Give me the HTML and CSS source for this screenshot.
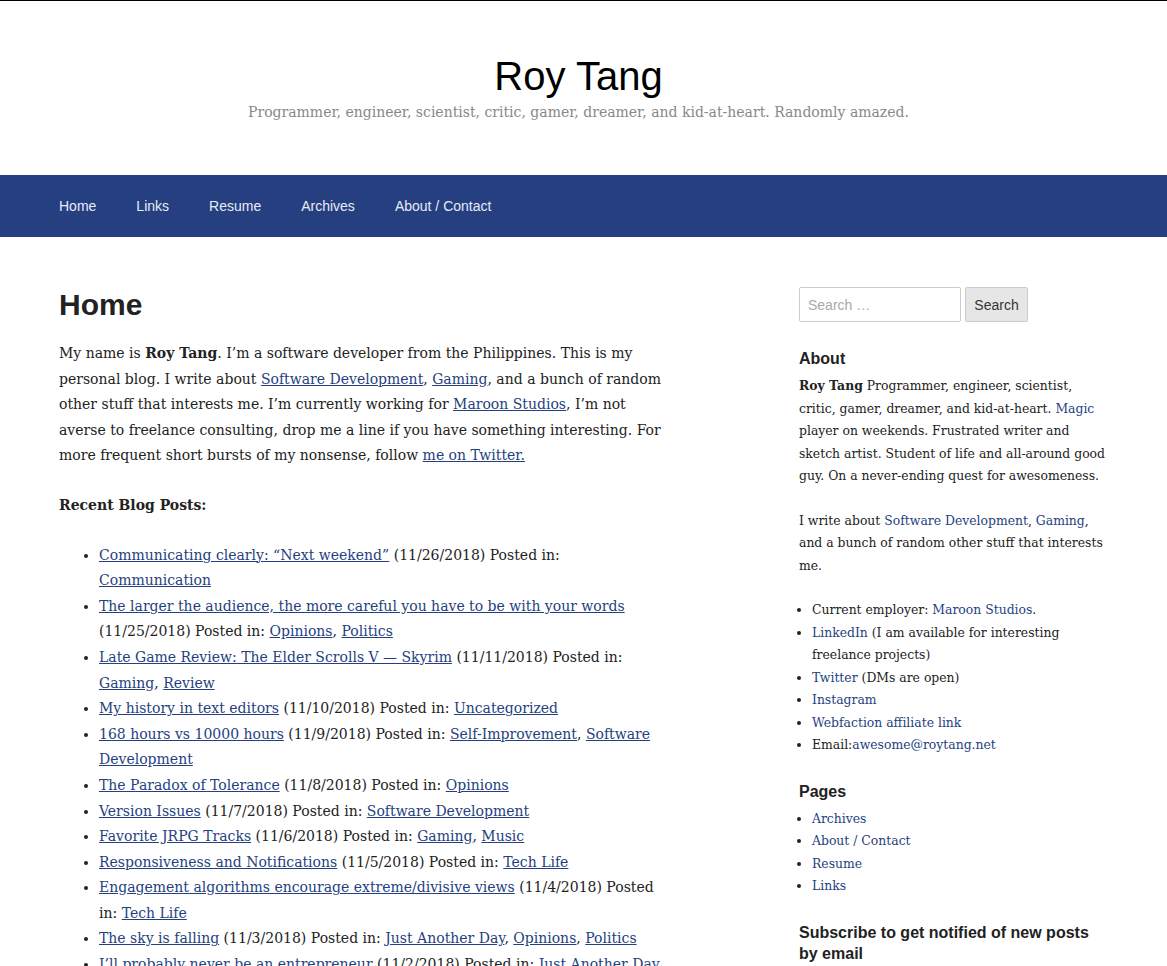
FILE: index.html
```html
<!DOCTYPE html>
<html lang="en">
<head>
<meta charset="utf-8">
<title>Roy Tang</title>
<link rel="stylesheet" href="styles.css">
</head>
<body>
<header class="site-header">
  <h1 class="site-title">Roy Tang</h1>
  <p class="site-desc">Programmer, engineer, scientist, critic, gamer, dreamer, and kid-at-heart. Randomly amazed.</p>
</header>
<nav class="main-nav">
  <ul>
    <li><a href="#">Home</a></li>
    <li><a href="#">Links</a></li>
    <li><a href="#">Resume</a></li>
    <li><a href="#">Archives</a></li>
    <li><a href="#">About / Contact</a></li>
  </ul>
</nav>
<div class="site-content">
  <main class="content">
    <h2 class="page-title">Home</h2>
    <p>My name is <strong>Roy Tang</strong>. I’m a software developer from the Philippines. This is my personal blog. I write about <a href="#">Software Development</a>, <a href="#">Gaming</a>, and a bunch of random other stuff that interests me. I’m currently working for <a href="#">Maroon Studios</a>, I’m not averse to freelance consulting, drop me a line if you have something interesting. For more frequent short bursts of my nonsense, follow <a href="#">me on Twitter.</a></p>
    <p><strong>Recent Blog Posts:</strong></p>
    <ul class="posts">
      <li><a href="#">Communicating clearly: “Next weekend”</a> (11/26/2018) Posted in: <a href="#">Communication</a></li>
      <li><a href="#">The larger the audience, the more careful you have to be with your words</a> (11/25/2018) Posted in: <a href="#">Opinions</a>, <a href="#">Politics</a></li>
      <li><a href="#">Late Game Review: The Elder Scrolls V — Skyrim</a> (11/11/2018) Posted in: <a href="#">Gaming</a>, <a href="#">Review</a></li>
      <li><a href="#">My history in text editors</a> (11/10/2018) Posted in: <a href="#">Uncategorized</a></li>
      <li><a href="#">168 hours vs 10000 hours</a> (11/9/2018) Posted in: <a href="#">Self-Improvement</a>, <a href="#">Software Development</a></li>
      <li><a href="#">The Paradox of Tolerance</a> (11/8/2018) Posted in: <a href="#">Opinions</a></li>
      <li><a href="#">Version Issues</a> (11/7/2018) Posted in: <a href="#">Software Development</a></li>
      <li><a href="#">Favorite JRPG Tracks</a> (11/6/2018) Posted in: <a href="#">Gaming</a>, <a href="#">Music</a></li>
      <li><a href="#">Responsiveness and Notifications</a> (11/5/2018) Posted in: <a href="#">Tech Life</a></li>
      <li><a href="#">Engagement algorithms encourage extreme/divisive views</a> (11/4/2018) Posted in: <a href="#">Tech Life</a></li>
      <li><a href="#">The sky is falling</a> (11/3/2018) Posted in: <a href="#">Just Another Day</a>, <a href="#">Opinions</a>, <a href="#">Politics</a></li>
      <li><a href="#">I’ll probably never be an entrepreneur</a> (11/2/2018) Posted in: <a href="#">Just Another Day</a></li>
    </ul>
  </main>
  <aside class="sidebar">
    <form class="search-form">
      <input type="search" class="search-field" placeholder="Search …">
      <button type="button" class="search-submit">Search</button>
    </form>
    <section class="widget">
      <h3 class="widget-title">About</h3>
      <p><strong>Roy Tang</strong> Programmer, engineer, scientist, critic, gamer, dreamer, and kid-at-heart. <a href="#">Magic</a> player on weekends. Frustrated writer and sketch artist. Student of life and all-around good guy. On a never-ending quest for awesomeness.</p>
      <p>I write about <a href="#">Software Development</a>, <a href="#">Gaming</a>, and a bunch of random other stuff that interests me.</p>
      <ul>
        <li>Current employer: <a href="#">Maroon Studios</a>.</li>
        <li><a href="#">LinkedIn</a> (I am available for interesting freelance projects)</li>
        <li><a href="#">Twitter</a> (DMs are open)</li>
        <li><a href="#">Instagram</a></li>
        <li><a href="#">Webfaction affiliate link</a></li>
        <li>Email:<a href="#">awesome@roytang.net</a></li>
      </ul>
    </section>
    <section class="widget">
      <h3 class="widget-title">Pages</h3>
      <ul>
        <li><a href="#">Archives</a></li>
        <li><a href="#">About / Contact</a></li>
        <li><a href="#">Resume</a></li>
        <li><a href="#">Links</a></li>
      </ul>
    </section>
    <section class="widget">
      <h3 class="widget-title">Subscribe to get notified of new posts by email</h3>
    </section>
  </aside>
</div>
</body>
</html>
```
FILE: styles.css
```css
html, body {
  margin: 0;
  padding: 0;
}
body {
  border-top: 1px solid #000;
  background: #fff;
  color: #222;
  font-family: "DejaVu Serif", Georgia, serif;
  font-size: 14px;
  line-height: 25.6px;
}
a {
  color: #253f80;
}
.site-header {
  text-align: center;
  padding: 50px 30px 0 20px;
  height: 174px;
  box-sizing: border-box;
}
.site-title {
  margin: 0;
  font-family: "Liberation Sans", Arial, sans-serif;
  font-weight: normal;
  font-size: 40px;
  line-height: 50px;
  color: #000;
}
.site-desc {
  margin: 0;
  color: #888;
  font-size: 14px;
  line-height: 22px;
}
.main-nav {
  background: #253f80;
  height: 62px;
}
.main-nav ul {
  list-style: none;
  margin: 0;
  padding: 0 0 0 59px;
  display: flex;
  gap: 40px;
}
.main-nav a {
  display: block;
  line-height: 62px;
  color: #e6ecf7;
  text-decoration: none;
  font-family: "Liberation Sans", Arial, sans-serif;
  font-size: 14px;
}
.site-content {
  display: flex;
  padding: 50px 59px 0;
  gap: 138px;
}
.content {
  flex: 0 0 602px;
}
.page-title {
  margin: 0 0 18px;
  font-family: "Liberation Sans", Arial, sans-serif;
  font-size: 30px;
  line-height: 36px;
  color: #222;
}
.content p {
  margin: 0 0 24px;
}
.posts {
  margin: 0;
  padding-left: 40px;
}
.sidebar {
  flex: 0 0 309px;
  font-size: 12.4px;
  line-height: 22.5px;
}
.search-form {
  display: flex;
  gap: 4px;
  margin-bottom: 26px;
}
.search-field {
  width: 162px;
  height: 35px;
  box-sizing: border-box;
  border: 1px solid #ccc;
  border-radius: 2px;
  padding: 0 8px;
  font-family: "Liberation Sans", Arial, sans-serif;
  font-size: 14px;
  color: #333;
}
.search-field::placeholder {
  color: #aaa;
}
.search-submit {
  height: 35px;
  width: 63px;
  border: 1px solid #ccc;
  border-radius: 2px;
  background: #e6e6e6;
  color: #333;
  font-family: "Liberation Sans", Arial, sans-serif;
  font-size: 14px;
  padding: 0;
}
.widget {
  margin-bottom: 24px;
}
.widget-title {
  margin: 0 0 6px;
  font-family: "Liberation Sans", Arial, sans-serif;
  font-size: 16px;
  line-height: 21px;
  color: #222;
}
.widget p {
  margin: 0 0 22px;
}
.widget a {
  text-decoration: none;
}
.widget ul {
  margin: 0;
  padding-left: 13px;
}
```
